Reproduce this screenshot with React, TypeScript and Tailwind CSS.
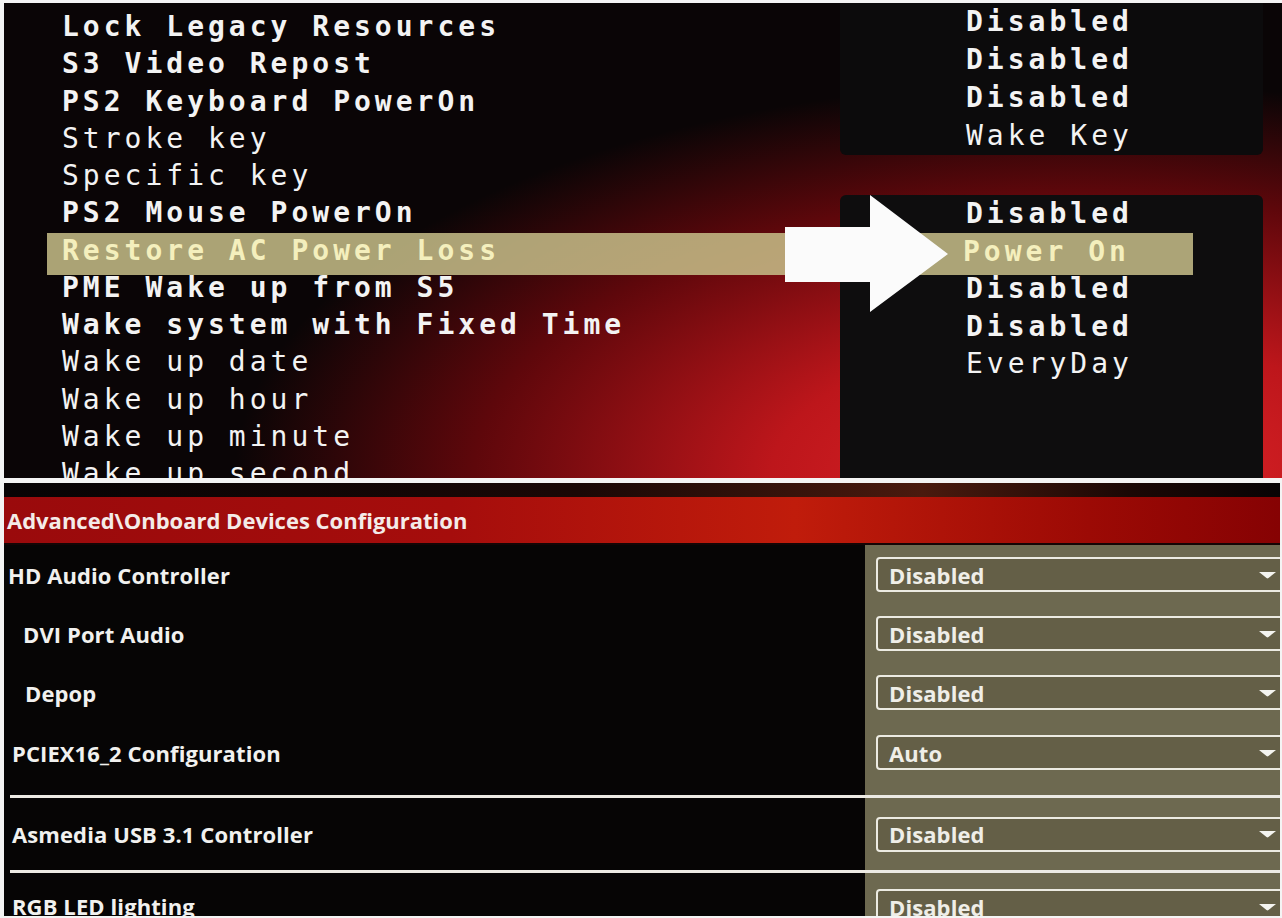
const topRows = [
  { label: "Lock Legacy Resources", bold: true },
  { label: "S3 Video Repost", bold: true },
  { label: "PS2 Keyboard PowerOn", bold: true },
  { label: "Stroke key", bold: false },
  { label: "Specific key", bold: false },
  { label: "PS2 Mouse PowerOn", bold: true },
  { label: "Restore AC Power Loss", bold: true, active: true },
  { label: "PME Wake up from S5", bold: true },
  { label: "Wake system with Fixed Time", bold: true },
  { label: "Wake up date", bold: false },
  { label: "Wake up hour", bold: false },
  { label: "Wake up minute", bold: false },
  { label: "Wake up second", bold: false },
];

const firstBox = [
  { value: "Disabled", bold: true },
  { value: "Disabled", bold: true },
  { value: "Disabled", bold: true },
  { value: "Wake Key", bold: false },
];

const secondBox = [
  { value: "Disabled", bold: true },
  { value: "Power On", bold: true, active: true },
  { value: "Disabled", bold: true },
  { value: "Disabled", bold: true },
  { value: "EveryDay", bold: false },
];

function BiosText({ text, bold, active }: { text: string; bold?: boolean; active?: boolean }) {
  return (
    <span
      className={
        (bold ? "font-bold " : "font-normal ") +
        (active ? "text-[#f4efbd]" : "text-[#f3f3f3]")
      }
    >
      {text}
    </span>
  );
}

function Dropdown({ value }: { value: string }) {
  return (
    <div className="ml-[11px] w-[410px] h-[35px] shrink-0 flex items-center justify-between rounded-[4px] border-[2.5px] border-[#ecebe2] bg-[#645f47] pl-[11px] pr-[5px]">
      <span className="text-[22px] font-bold text-[#efeee8] leading-none tracking-[0.1px]">{value}</span>
      <svg width="19" height="8" viewBox="0 0 19 8" className="mr-[2px]">
        <path d="M1 1 H18 L10.5 7 Q9.5 7.8 8.5 7 Z" fill="#f4f4f0" />
      </svg>
    </div>
  );
}

function Row({
  label,
  value,
  indent,
  height,
  top,
}: {
  label?: string;
  value?: string;
  indent: string;
  height: string;
  top?: boolean;
}) {
  return (
    <div className={"flex shrink-0 " + height}>
      <div className={"flex-1 flex " + (top ? "items-start pt-[16px] " : "items-center ") + indent}>
        {label && (
          <span className={"text-[22px] font-bold text-[#f1f1ef] tracking-[0.1px] " + (top ? "leading-[35px]" : "leading-none")}>
            {label}
          </span>
        )}
      </div>
      <div className={"w-[415px] flex bg-[#6d6950] overflow-hidden " + (top ? "items-start pt-[16px]" : "items-center")}>
        {value && <Dropdown value={value} />}
      </div>
    </div>
  );
}

function Separator() {
  return (
    <div className="flex shrink-0 h-[3px]">
      <div className="w-[6px] bg-[#060505]" />
      <div className="flex-1 bg-[#eceae4]" />
    </div>
  );
}

export default function App() {
  return (
    <div className="w-[1282px] h-[918px] overflow-hidden bg-[#f4f4f4] pt-[3px] pl-[4px]">
      {/* upper BIOS photo */}
      <div className="relative flex w-[1278px] h-[475px] overflow-hidden bg-[radial-gradient(ellipse_75%_95%_at_84%_100%,#e3262a_0%,#bd161b_32%,#5e070b_63%,#0a0506_88%)] font-['DejaVu_Sans_Mono',monospace] text-[28px] tracking-[4px]">
        <div className="flex flex-col w-[836px] pt-[5px] pl-[58px]">
          {topRows.map((r) => (
            <div key={r.label} className="relative z-10 h-[37.25px] leading-[37.25px] shrink-0 whitespace-nowrap">
              <BiosText text={r.label} bold={r.bold} active={r.active} />
            </div>
          ))}
        </div>
        <div className="flex flex-col w-[423px]">
          <div className="h-[152px] rounded-b-[6px] bg-[#0c0b0c] pl-[126px]">
            {firstBox.map((r, i) => (
              <div key={i} className="relative z-10 h-[38px] leading-[38px] whitespace-nowrap">
                <BiosText text={r.value} bold={r.bold} />
              </div>
            ))}
          </div>
          <div className="mt-[40px] flex-1 rounded-t-[6px] bg-[#0e0d0e] pl-[123px]">
            {secondBox.map((r, i) => (
              <div key={i} className={"relative z-10 h-[37.5px] leading-[37.5px] whitespace-nowrap " + (r.active ? "" : "pl-[3px]")}>
                <BiosText text={r.value} bold={r.bold} active={r.active} />
              </div>
            ))}
          </div>
        </div>

        {/* selection bar */}
        <div className="absolute left-[43px] top-[230px] w-[1146px] h-[42px] bg-[rgba(198,190,136,0.86)]" />

        {/* arrow */}
        <svg className="absolute left-[781px] top-[192px] z-20" width="163" height="117" viewBox="0 0 163 117">
          <path d="M0 32 H85 V0 L163 59 L85 117 V87 H0 Z" fill="#fbfbfb" />
        </svg>
      </div>

      {/* lower BIOS photo */}
      <div className="mt-[5px] flex flex-col w-[1276px] h-[433px] overflow-hidden bg-[#060505] font-['Open_Sans',sans-serif]">
        <div className="h-[14px] shrink-0 bg-[linear-gradient(90deg,#070405_0%,#1a0806_45%,#4a1a0e_72%,#1b0805_88%,#080405_100%)]" />
        <div className="h-[46px] shrink-0 flex items-center pl-[3px] bg-[linear-gradient(90deg,#9a0a0c_0%,#a50d0c_35%,#c01c0b_62%,#9c0a05_85%,#860203_100%)]">
          <span className="text-[22px] font-bold text-[#f4ebe8] tracking-[0px] leading-none">
            Advanced\Onboard Devices Configuration
          </span>
        </div>
        <div className="h-[2px] shrink-0 bg-[#140505]" />

        <Row label="HD Audio Controller" value="Disabled" indent="pl-[4px]" height="h-[59px]" />
        <Row label="DVI Port Audio" value="Disabled" indent="pl-[19px]" height="h-[59px]" />
        <Row label="Depop" value="Disabled" indent="pl-[21px]" height="h-[59px]" />
        <Row label="PCIEX16_2 Configuration" value="Auto" indent="pl-[8px]" height="h-[61px]" />
        <Row indent="" height="h-[12px]" />
        <Separator />
        <Row label="Asmedia USB 3.1 Controller" value="Disabled" indent="pl-[8px]" height="h-[72px]" />
        <Separator />
        <Row label="RGB LED lighting" value="Disabled" indent="pl-[8px]" height="h-[62px]" top />
      </div>
    </div>
  );
}
